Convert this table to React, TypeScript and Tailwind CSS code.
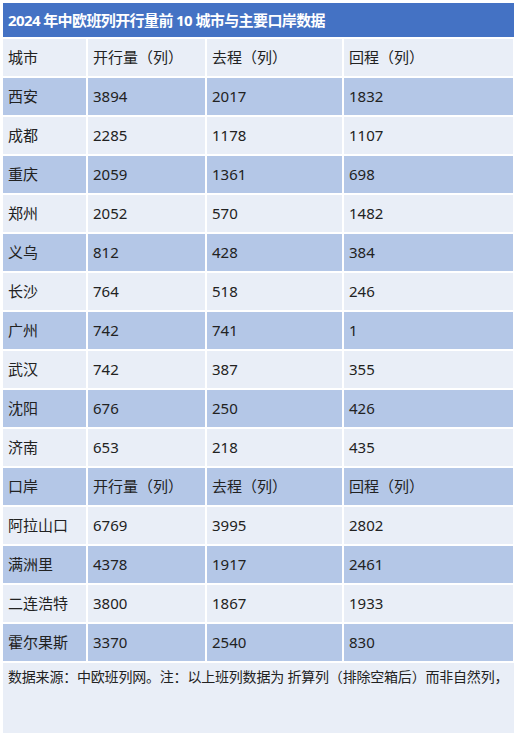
const ROWS: string[][] = [
  ['城市', '开行量（列）', '去程（列）', '回程（列）'],
  ['西安', '3894', '2017', '1832'],
  ['成都', '2285', '1178', '1107'],
  ['重庆', '2059', '1361', '698'],
  ['郑州', '2052', '570', '1482'],
  ['义乌', '812', '428', '384'],
  ['长沙', '764', '518', '246'],
  ['广州', '742', '741', '1'],
  ['武汉', '742', '387', '355'],
  ['沈阳', '676', '250', '426'],
  ['济南', '653', '218', '435'],
  ['口岸', '开行量（列）', '去程（列）', '回程（列）'],
  ['阿拉山口', '6769', '3995', '2802'],
  ['满洲里', '4378', '1917', '2461'],
  ['二连浩特', '3800', '1867', '1933'],
  ['霍尔果斯', '3370', '2540', '830'],
];

const font = { fontFamily: '"Noto Sans", "Noto Sans CJK SC", sans-serif' };

export default function App() {
  return (
    <div className="w-[517px] h-[733px] bg-white pt-[3px] px-[3px] overflow-hidden" style={font}>
      {/* Title */}
      <div className="h-[34px] bg-[#4472c4] flex items-center pl-[5px] text-white font-bold text-[15px] tracking-[-0.6px]">
        2024 年中欧班列开行量前 10 城市与主要口岸数据
      </div>

      {/* Table */}
      <div className="grid grid-cols-[83px_117px_135px_169px] gap-[2px] mt-[2px]">
        {ROWS.map((row, i) => {
          const bg = i % 2 === 0 ? 'bg-[#e9eef7]' : 'bg-[#b4c7e7]';
          return row.map((cell, j) => (
            <div
              key={`${i}-${j}`}
              className={`h-[37px] flex items-center pl-[5px] text-[15px] text-[#222] ${bg}`}
            >
              {cell}
            </div>
          ));
        })}
      </div>

      {/* Footer note */}
      <div className="mt-[2px] h-[80px] bg-[#e9eef7] pl-[5px] pt-[3px] text-[14px] text-[#222] whitespace-nowrap tracking-[-0.2px]">
        数据来源：中欧班列网。注：以上班列数据为 折算列（排除空箱后）而非自然列，
      </div>
    </div>
  );
}
